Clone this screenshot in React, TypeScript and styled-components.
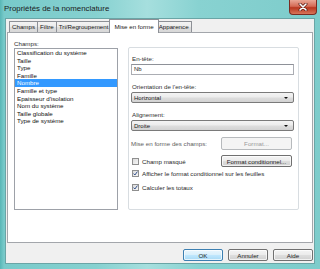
import React from "react";
import styled, { createGlobalStyle } from "styled-components";

const FONT = `"Liberation Sans", Arial, sans-serif`;

const GlobalStyle = createGlobalStyle`
  html, body {
    margin: 0;
    padding: 0;
  }
  body {
    width: 320px;
    height: 269px;
    overflow: hidden;
    background: #7fcfcf;
  }
  * {
    box-sizing: border-box;
  }
`;

const Window = styled.div`
  width: 320px;
  height: 269px;
  display: flex;
  flex-direction: column;
  font-family: ${FONT};
  background: linear-gradient(
    90deg,
    #58b6b6 0px,
    #78caca 4px,
    #86d1d0 30%,
    #a6dfde 46%,
    #88d2d1 62%,
    #7dcccb 100%
  );
`;

const TitleBar = styled.div`
  height: 18px;
  flex-shrink: 0;
  display: flex;
  align-items: flex-start;
  justify-content: space-between;
`;

const Title = styled.div`
  margin: 4px 0 0 4px;
  font-size: 7.9px;
  line-height: 9px;
  color: #1b1b1b;
`;

const CloseButton = styled.div`
  width: 28px;
  height: 15px;
  margin-right: 3px;
  border: 1px solid #7a2c22;
  border-top: none;
  border-radius: 0 0 4px 4px;
  background: linear-gradient(#e9a796, #d46a55 45%, #b8371f 55%, #d8755a);
  display: flex;
  align-items: center;
  justify-content: center;
`;

const Client = styled.div`
  flex: 1;
  margin: 0 5px 5px;
  border: 1px solid #6aa5a6;
  background: #f0f0f0;
  padding: 0 1px;
  display: flex;
  flex-direction: column;
`;

const TabStrip = styled.div`
  height: 14px;
  margin-bottom: -1px;
  padding-left: 2px;
  display: flex;
  align-items: flex-start;
  position: relative;
  z-index: 1;
`;

const Tab = styled.div<{ $active?: boolean }>`
  height: ${(p) => (p.$active ? 14 : 11)}px;
  margin-top: ${(p) => (p.$active ? 0 : 2)}px;
  margin-left: ${(p) => (p.$active ? -2 : -1)}px;
  margin-right: ${(p) => (p.$active ? -2 : 0)}px;
  padding: 0 ${(p) => (p.$active ? 4 : 2)}px;
  border: 1px solid #8d9096;
  border-bottom: none;
  border-radius: 1px 1px 0 0;
  background: ${(p) =>
    p.$active ? "#ffffff" : "linear-gradient(#f3f3f3, #ebebeb 50%, #dedede 51%, #d8d8d8)"};
  position: relative;
  z-index: ${(p) => (p.$active ? 2 : 1)};
  font-size: 6.2px;
  line-height: ${(p) => (p.$active ? 13 : 10)}px;
  color: #1a1a1a;
  white-space: nowrap;

  &:first-child {
    margin-left: 0;
  }
`;

const Panel = styled.div`
  height: 211px;
  border: 1px solid #a3a6ab;
  background: #ffffff;
`;

const PanelBody = styled.div`
  display: grid;
  grid-template-columns: 104px 171px;
  column-gap: 10px;
  padding: 7px 0 0 6px;
`;

const FieldColumn = styled.div`
  display: flex;
  flex-direction: column;
`;

const Label = styled.div<{ $muted?: boolean }>`
  font-size: 6.2px;
  line-height: 8px;
  color: ${(p) => (p.$muted ? "#5e5e5e" : "#303030")};
  white-space: nowrap;
`;

const ListBox = styled.div`
  height: 162px;
  border: 1px solid #9da1a8;
  background: #ffffff;
`;

const ListItem = styled.div<{ $selected?: boolean }>`
  height: 7.6px;
  padding-left: 2px;
  font-size: 6.2px;
  line-height: 7.6px;
  white-space: nowrap;
  color: ${(p) => (p.$selected ? "#ffffff" : "#101010")};
  background: ${(p) => (p.$selected ? "#3399ff" : "transparent")};
`;

const GroupBox = styled.div`
  margin-top: 7px;
  height: 163px;
  border: 1px solid #d8dde1;
  border-radius: 2px;
  padding: 7px 4px 0 2px;
  display: flex;
  flex-direction: column;
`;

const Field = styled.div`
  display: flex;
  flex-direction: column;
  & + & {
    margin-top: 8px;
  }
  ${Label} {
    padding-left: 1px;
    margin-bottom: 1px;
  }
`;

const TextBox = styled.div`
  height: 11px;
  border: 1px solid #abadb3;
  border-top-color: #8e9198;
  padding-left: 2px;
  font-size: 6px;
  line-height: 9px;
  color: #222;
`;

const Select = styled.div`
  height: 11px;
  border: 1px solid #7a7a7a;
  border-radius: 2px;
  padding: 0 5px 0 2px;
  background: linear-gradient(#f4f4f4, #ececec 45%, #dddddd 55%, #d2d2d2);
  display: flex;
  align-items: center;
  justify-content: space-between;
  font-size: 6px;
  color: #1a1a1a;
`;

const Arrow = styled.span`
  width: 0;
  height: 0;
  border-left: 2px solid transparent;
  border-right: 2px solid transparent;
  border-top: 2px solid #111;
`;

const OptionRow = styled.div<{ $gap: number; $height: number }>`
  margin-top: ${(p) => p.$gap}px;
  height: ${(p) => p.$height}px;
  display: flex;
  align-items: center;
  justify-content: space-between;
  padding-right: 2px;
`;

const CheckLine = styled.label`
  display: flex;
  align-items: center;
  gap: 3px;
  padding-left: 1px;
  font-size: 6.2px;
  color: #1f1f1f;
  white-space: nowrap;
`;

const CheckBox = styled.span`
  width: 7px;
  height: 7px;
  flex-shrink: 0;
  border: 1px solid #8f8f8f;
  background: linear-gradient(135deg, #dcdcdc, #f6f6f6);
  display: flex;
  align-items: center;
  justify-content: center;
`;

const PushButton = styled.div<{ $disabled?: boolean; $default?: boolean; $width: number; $height?: number }>`
  width: ${(p) => p.$width}px;
  height: ${(p) => p.$height ?? 12}px;
  border: 1px solid ${(p) => (p.$disabled ? "#b7babd" : p.$default ? "#3c7fb1" : "#707070")};
  border-radius: 2px;
  background: ${(p) =>
    p.$disabled
      ? "#f4f4f4"
      : p.$default
      ? "linear-gradient(#eaf6fd, #d9f0fc 45%, #bee6fd 55%, #a7d9f5)"
      : "linear-gradient(#f4f4f4, #ececec 45%, #dddddd 55%, #d0d0d0)"};
  box-shadow: inset 0 0 0 1px ${(p) => (p.$disabled ? "transparent" : "rgba(255,255,255,0.7)")};
  display: flex;
  align-items: center;
  justify-content: center;
  font-size: 6.2px;
  color: ${(p) => (p.$disabled ? "#9a9a9a" : "#1f1f1f")};
  white-space: nowrap;
`;

const ButtonRow = styled.div`
  margin-top: 6px;
  display: flex;
  justify-content: flex-end;
  gap: 5px;
`;

const fields = [
  "Classification du système",
  "Taille",
  "Type",
  "Famille",
  "Nombre",
  "Famille et type",
  "Epaisseur d'isolation",
  "Nom du système",
  "Taille globale",
  "Type de système",
];

const tabs = ["Champs", "Filtre", "Tri/Regroupement", "Mise en forme", "Apparence"];

const Check = () => (
  <svg width="5" height="5" viewBox="0 0 5 5">
    <path d="M0.6 2.6 L1.9 4 L4.4 0.6" fill="none" stroke="#33508a" strokeWidth="1" />
  </svg>
);

const CloseGlyph = () => (
  <svg width="10" height="8" viewBox="0 0 10 8">
    <path d="M2 1 L8 7 M8 1 L2 7" stroke="#5a1a12" strokeWidth="3" strokeLinecap="round" />
    <path d="M2 1 L8 7 M8 1 L2 7" stroke="#ffffff" strokeWidth="1.6" strokeLinecap="round" />
  </svg>
);

export default function App() {
  return (
    <>
      <GlobalStyle />
      <Window>
        <TitleBar>
          <Title>Propriétés de la nomenclature</Title>
          <CloseButton>
            <CloseGlyph />
          </CloseButton>
        </TitleBar>
        <Client>
          <TabStrip>
            {tabs.map((t) => (
              <Tab key={t} $active={t === "Mise en forme"}>
                {t}
              </Tab>
            ))}
          </TabStrip>
          <Panel>
            <PanelBody>
              <FieldColumn>
                <Label>Champs:</Label>
                <ListBox>
                  {fields.map((f) => (
                    <ListItem key={f} $selected={f === "Nombre"}>
                      {f}
                    </ListItem>
                  ))}
                </ListBox>
              </FieldColumn>
              <GroupBox>
                <Field>
                  <Label>En-tête:</Label>
                  <TextBox>Nb</TextBox>
                </Field>
                <Field>
                  <Label>Orientation de l'en-tête:</Label>
                  <Select>
                    Horizontal
                    <Arrow />
                  </Select>
                </Field>
                <Field>
                  <Label>Alignement:</Label>
                  <Select>
                    Droite
                    <Arrow />
                  </Select>
                </Field>
                <OptionRow $gap={6} $height={13}>
                  <Label $muted>Mise en forme des champs:</Label>
                  <PushButton $disabled $width={71} $height={13}>
                    Format...
                  </PushButton>
                </OptionRow>
                <OptionRow $gap={5} $height={12}>
                  <CheckLine>
                    <CheckBox />
                    Champ masqué
                  </CheckLine>
                  <PushButton $width={71}>Format conditionnel...</PushButton>
                </OptionRow>
                <OptionRow $gap={2} $height={8}>
                  <CheckLine>
                    <CheckBox>
                      <Check />
                    </CheckBox>
                    Afficher le format conditionnel sur les feuilles
                  </CheckLine>
                </OptionRow>
                <OptionRow $gap={6} $height={8}>
                  <CheckLine>
                    <CheckBox>
                      <Check />
                    </CheckBox>
                    Calculer les totaux
                  </CheckLine>
                </OptionRow>
              </GroupBox>
            </PanelBody>
          </Panel>
          <ButtonRow>
            <PushButton $default $width={40}>
              OK
            </PushButton>
            <PushButton $width={40}>Annuler</PushButton>
            <PushButton $width={40}>Aide</PushButton>
          </ButtonRow>
        </Client>
      </Window>
    </>
  );
}
